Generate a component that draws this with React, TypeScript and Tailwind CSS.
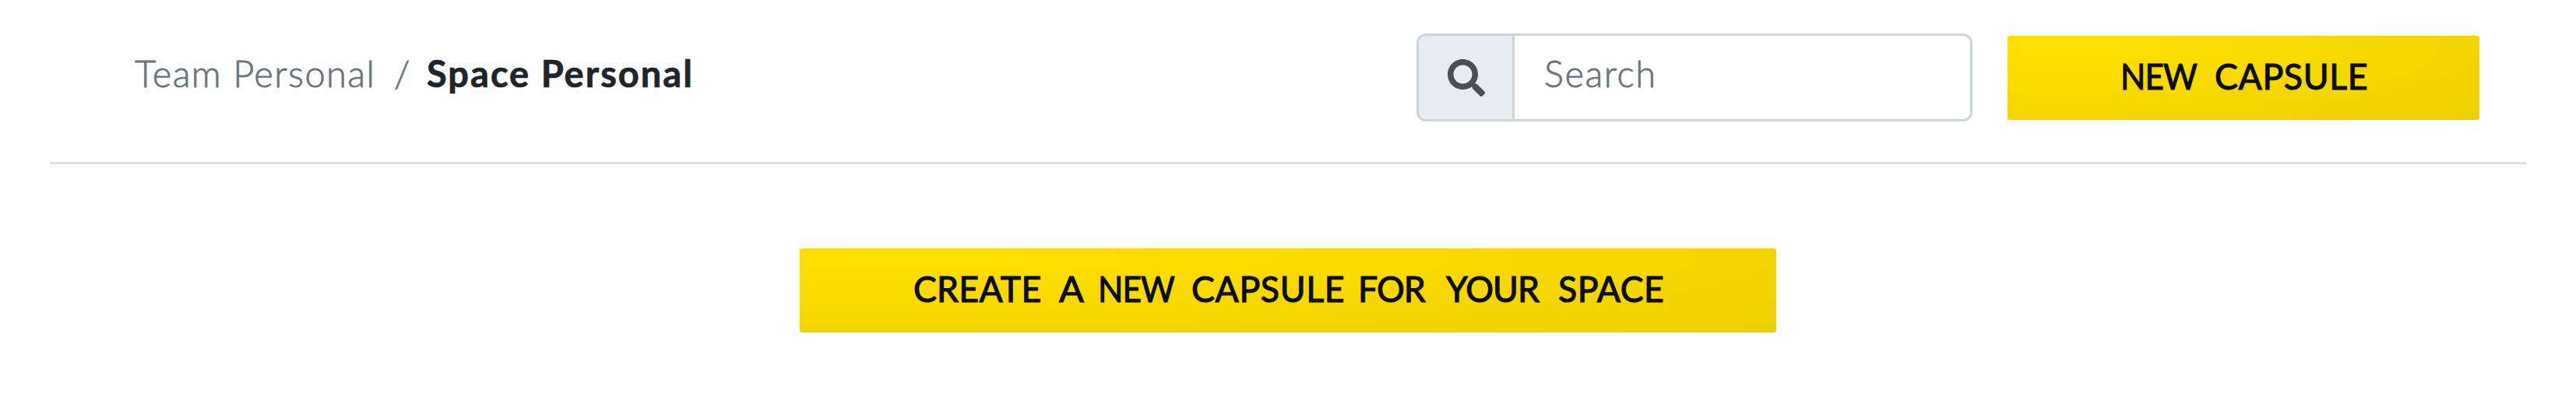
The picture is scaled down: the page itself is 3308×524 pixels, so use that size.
import { FaSearch } from "react-icons/fa";

const capsuleButton =
  "flex h-[108px] items-center rounded-[3px] bg-[radial-gradient(ellipse_at_12%_12%,#ffe000_0%,#fbdb00_30%,#f4d600_60%,#edd000_100%)] pb-[5px] text-left font-['Lato'] text-[47px] leading-none font-normal whitespace-nowrap text-[#0c0c0c] [-webkit-text-stroke:1.2px_#0c0c0c]";

export default function App() {
  return (
    <main className="h-[524px] w-[3308px] overflow-hidden bg-[#fefefe] px-16 font-['Lato',sans-serif]">
      <header className="flex h-[211px] items-start border-b-[3px] border-[#e0e0e0] pr-[60px] pl-[109px]">
        <nav className="mt-[66px] flex text-[47px] leading-[56px] whitespace-nowrap">
          <a className="w-[333px] font-light tracking-[1.4px] text-[#6c757d] [-webkit-text-stroke:0.8px_#6c757d]">Team Personal</a>
          <span className="w-[42px] font-light text-[#6c757d] [-webkit-text-stroke:0.8px_#6c757d]">/</span>
          <span className="font-bold tracking-[2px] text-[#212529] [-webkit-text-stroke:0.7px_#212529]">Space Personal</span>
        </nav>
        <div className="mt-[43px] ml-auto flex h-[113px] w-[714px] overflow-hidden rounded-[12px] border-[3px] border-[#ced4da] bg-white">
          <div className="flex w-[123px] items-center border-r-[3px] border-[#ced4da] bg-[#e9ecef] pl-[37px]">
            <FaSearch className="size-[48px] text-[#495057]" />
          </div>
          <span className="mt-[20px] pl-[38px] text-[47px] leading-[56px] font-light tracking-[1.5px] text-[#6c757d] [-webkit-text-stroke:0.8px_#6c757d]">Search</span>
        </div>
        <button className={capsuleButton + " mt-[45.5px] ml-[45px] w-[606px] pl-[145px]"}>
          <span className="w-[121px] origin-left scale-x-90 tracking-[-1px]">NEW</span>
          <span className="origin-left scale-x-95 tracking-[0.7px]">CAPSULE</span>
        </button>
      </header>
      <section className="flex justify-center pt-[107.5px]">
        <button className={capsuleButton + " w-[1254px] pl-[146px]"}>
          <span className="w-[187px] origin-left scale-x-95 tracking-[0.3px]">CREATE</span>
          <span className="w-[50px]">A</span>
          <span className="w-[120px] origin-left scale-x-90 tracking-[-1px]">NEW</span>
          <span className="w-[214px] origin-left scale-x-95 tracking-[0.7px]">CAPSULE</span>
          <span className="w-[113px] origin-left scale-x-95 tracking-[-1px]">FOR</span>
          <span className="w-[144px] origin-left scale-x-95 tracking-[-1px]">YOUR</span>
          <span className="origin-left scale-x-95 tracking-[0.5px]">SPACE</span>
        </button>
      </section>
    </main>
  );
}
